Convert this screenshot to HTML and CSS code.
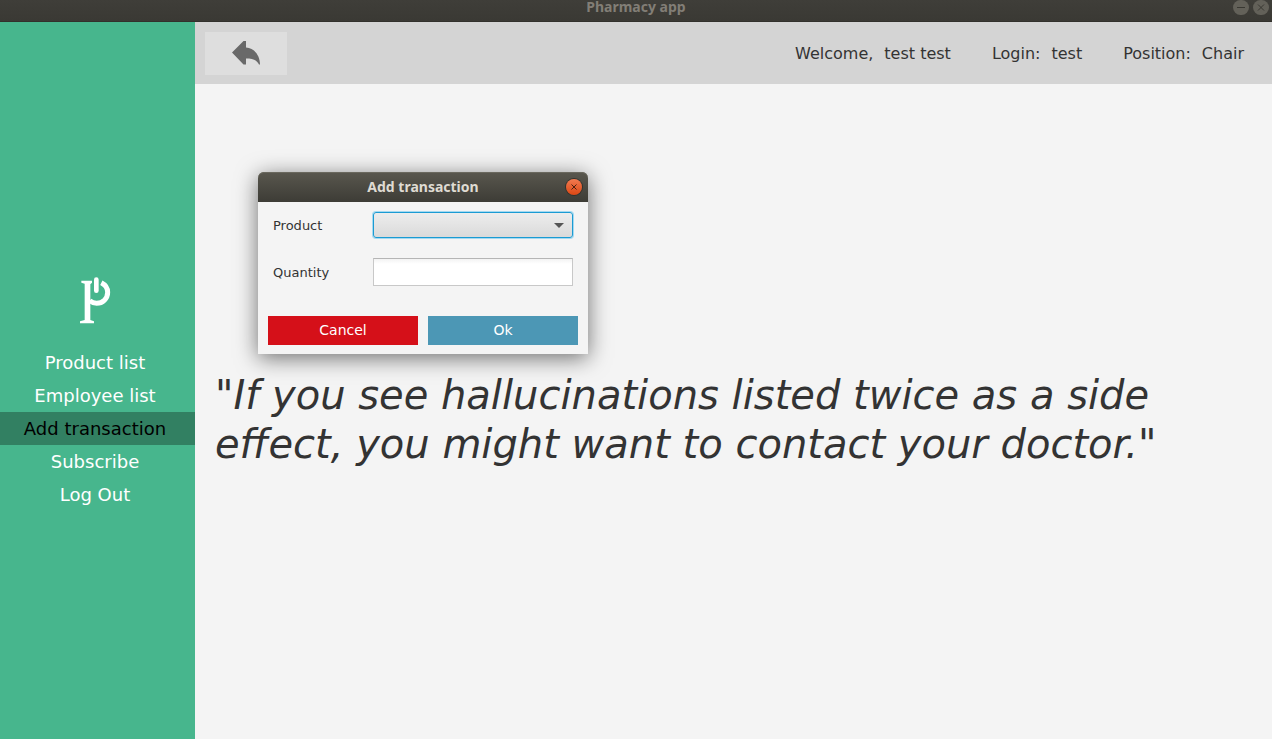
FILE: index.html
```html
<!DOCTYPE html>
<html lang="en">
<head>
<meta charset="utf-8">
<meta name="viewport" content="width=device-width, initial-scale=1">
<title>Pharmacy app</title>
<link rel="stylesheet" href="styles.css">
</head>
<body>
<div class="window">
  <header class="titlebar">
    <h1 class="titlebar-title">Pharmacy app</h1>
    <div class="titlebar-controls">
      <button class="window-button" type="button" aria-label="Minimize">
        <svg viewBox="0 0 16 16"><path d="M4 7.500h8"/></svg>
      </button>
      <button class="window-button" type="button" aria-label="Close">
        <svg viewBox="0 0 16 16"><path d="M5 4.500l6 6M11 4.500l-6 6"/></svg>
      </button>
    </div>
  </header>
  <div class="workspace">
    <aside class="sidebar">
      <svg class="logo" viewBox="60 36 96 144" aria-hidden="true">
        <path class="logo-fill" d="M64 47H96V53L91 58V165L102 169V175H60V169L74 165V56L64 53z"/>
        <path class="logo-ring" d="M124 53C136 59 143 69 143 82C143 101 128 115 110 115C102 115 95 112 89 107"/>
        <path class="logo-bar" d="M109 44v33"/>
      </svg>
      <nav class="menu">
        <a class="menu-item" href="#">Product list</a>
        <a class="menu-item" href="#">Employee list</a>
        <a class="menu-item menu-item-active" href="#" aria-current="page">Add transaction</a>
        <a class="menu-item" href="#">Subscribe</a>
        <a class="menu-item" href="#">Log Out</a>
      </nav>
    </aside>
    <div class="content">
      <div class="topbar">
        <button class="back-button" type="button" aria-label="Back">
          <svg class="back-icon" viewBox="0 0 28 24"><path d="M0 11.500L11.500 0H14v6.500C22 7 28 14 28 23.500H27C25 19 21 17.500 14 17.500V23.500H11.500z"/></svg>
        </button>
        <dl class="user-info">
          <div class="user-field"><dt>Welcome,</dt><dd>test test</dd></div>
          <div class="user-field"><dt>Login:</dt><dd>test</dd></div>
          <div class="user-field"><dt>Position:</dt><dd>Chair</dd></div>
        </dl>
      </div>
      <main class="main">
        <p class="quote">"If you see hallucinations listed twice as a side effect, you might want to contact your doctor."</p>
      </main>
    </div>
  </div>
</div>
<section class="dialog" role="dialog" aria-labelledby="dialog-title">
  <header class="dialog-header">
    <h2 class="dialog-title" id="dialog-title">Add transaction</h2>
    <button class="dialog-close" type="button" aria-label="Close dialog">
      <svg viewBox="0 0 16 16"><path d="M5.500 5.500l5 5M10.500 5.500l-5 5"/></svg>
    </button>
  </header>
  <form class="dialog-form">
    <div class="field">
      <label class="field-label" for="product">Product</label>
      <div class="select-wrap">
        <select class="select" id="product"><option></option></select>
        <svg class="select-arrow" viewBox="0 0 10 5"><path d="M0 0h10L5 5z"/></svg>
      </div>
    </div>
    <div class="field">
      <label class="field-label" for="quantity">Quantity</label>
      <input class="text-input" id="quantity" type="text">
    </div>
    <div class="actions">
      <button class="action action-cancel" type="button">Cancel</button>
      <button class="action action-ok" type="button">Ok</button>
    </div>
  </form>
</section>
</body>
</html>
```
FILE: styles.css
```css
* {
  box-sizing: border-box;
}

body {
  margin: 0;
  background: #f4f4f4;
  color: #333;
  font-family: "DejaVu Sans", sans-serif;
}

button,
input,
select {
  font-family: inherit;
}

.window {
  display: flex;
  flex-direction: column;
  min-height: 100vh;
}

.titlebar {
  display: grid;
  grid-template-columns: 1fr auto 1fr;
  height: 22px;
  padding: 0 3px;
  background: linear-gradient(#3f3e39, #3a3934);
  border-bottom: 1px solid #32312c;
}

.titlebar-title {
  grid-column: 2;
  margin: 0;
  color: #827e76;
  font: 700 14px/14px "Noto Sans", sans-serif;
}

.titlebar-controls {
  display: flex;
  justify-content: flex-end;
  gap: 4px;
}

.window-button {
  width: 16px;
  height: 15px;
  padding: 0;
  border: 0;
  background: #636159;
  border-radius: 8px;
}

.window-button svg {
  display: block;
  width: 16px;
  height: 16px;
  fill: none;
  stroke: #393832;
  stroke-width: 1;
}

.workspace {
  display: flex;
  flex: 1;
}

.sidebar {
  display: flex;
  flex: 0 0 195px;
  flex-direction: column;
  justify-content: center;
  padding-top: 26px;
  background: #47b68d;
}

.logo {
  width: 32px;
  height: 48px;
  margin: 0 auto 21px 80px;
}

.logo-fill {
  fill: #fff;
}

.logo-ring,
.logo-bar {
  fill: none;
  stroke: #fff;
  stroke-width: 15;
}

.logo-bar {
  stroke-width: 14;
  stroke-linecap: round;
}

.menu {
  display: flex;
  flex-direction: column;
}

.menu-item {
  padding: 6px 5px 6px 0;
  color: #fff;
  font-size: 18px;
  line-height: 21px;
  text-align: center;
  text-decoration: none;
}

.menu-item-active {
  background: #328062;
  color: #000;
}

.content {
  display: flex;
  flex: 1;
  flex-direction: column;
  min-width: 0;
}

.topbar {
  display: flex;
  align-items: center;
  justify-content: space-between;
  height: 62px;
  padding: 0 28px 0 10px;
  background: #d4d4d4;
}

.back-button {
  display: flex;
  align-items: center;
  justify-content: center;
  width: 82px;
  height: 43px;
  padding: 0;
  border: 0;
  background: #dedede;
}

.back-icon {
  width: 28px;
  height: 24px;
  fill: #696969;
}

.user-info {
  display: flex;
  gap: 41px;
  margin: 0;
  font-size: 16px;
  line-height: 19px;
}

.user-field {
  display: flex;
  gap: 11px;
}

.user-field dd {
  margin: 0;
}

.main {
  display: flex;
  flex: 1;
  align-items: center;
  padding: 17px 20px 0;
}

.quote {
  margin: 0;
  font-size: 40px;
  font-style: italic;
  line-height: 49px;
}

.dialog {
  position: absolute;
  top: 172px;
  left: 258px;
  width: 330px;
  background: #f4f4f4;
  border-radius: 6px 6px 0 0;
  box-shadow: 0 4px 22px rgba(0, 0, 0, 0.55);
}

.dialog-header {
  display: grid;
  grid-template-columns: 1fr auto 1fr;
  align-items: center;
  height: 30px;
  padding: 0 6px;
  background: linear-gradient(#59574e, #3d3c36);
  border-radius: 6px 6px 0 0;
  box-shadow: inset 0 1px #6a685e;
}

.dialog-title {
  grid-column: 2;
  margin: 0;
  color: #dfdbd2;
  font: 700 14px/20px "Noto Sans", sans-serif;
}

.dialog-close {
  justify-self: end;
  width: 16px;
  height: 16px;
  padding: 0;
  border: 0;
  background: linear-gradient(#f27a50, #dd4814);
  border-radius: 8px;
  box-shadow: 0 0 0 1px #33322d;
}

.dialog-close svg {
  display: block;
  width: 16px;
  height: 16px;
  fill: none;
  stroke: #4a2011;
  stroke-width: 1;
}

.dialog-form {
  padding: 9px 10px;
}

.field {
  display: grid;
  grid-template-columns: 100px 1fr;
  align-items: center;
  min-height: 28px;
  margin-bottom: 19px;
  padding: 0 5px;
  font-size: 13px;
  line-height: 18px;
}

.field-label {
  padding-top: 2px;
}

.select-wrap {
  position: relative;
}

.select,
.text-input {
  display: block;
  width: 100%;
  height: 28px;
  padding: 4px 8px;
  font-size: 13px;
}

.select {
  height: 26px;
  appearance: none;
  background: linear-gradient(#ededed, #dadada);
  border: 1px solid #1b9bd3;
  border-radius: 3px;
  box-shadow: 0 0 0 1px #a5d9f0;
  outline: 0;
}

.select-arrow {
  position: absolute;
  top: 11px;
  right: 9px;
  width: 10px;
  height: 5px;
  fill: #555;
  pointer-events: none;
}

.text-input {
  background: linear-gradient(#f3f3f3, #fff 5px);
  border: 1px solid #c8c8c8;
  border-top-color: #b5b5b5;
}

.actions {
  display: grid;
  grid-template-columns: 1fr 1fr;
  gap: 10px;
  padding-top: 11px;
}

.action {
  height: 29px;
  padding: 0 0 2px;
  border: 0;
  color: #fff;
  font-size: 14px;
  line-height: 16px;
}

.action-cancel {
  background: #d51019;
}

.action-ok {
  background: #4c97b5;
}
```
